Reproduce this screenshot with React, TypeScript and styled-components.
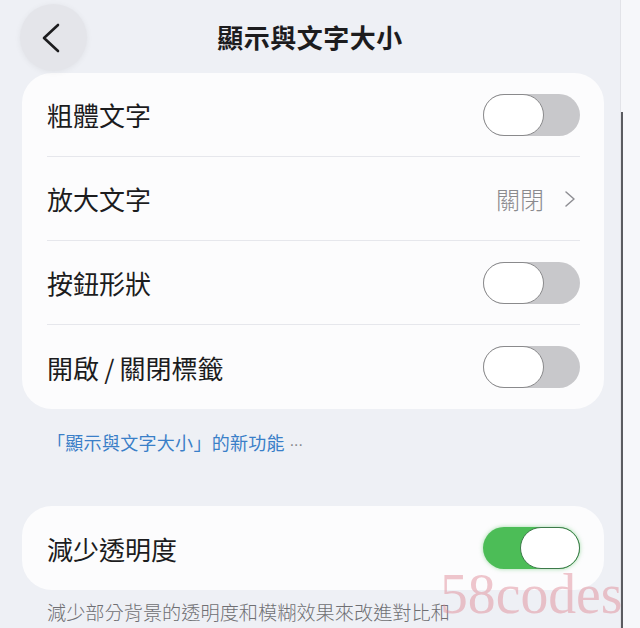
import styled, { createGlobalStyle } from 'styled-components';

const GlobalStyle = createGlobalStyle`
  html, body {
    margin: 0;
    padding: 0;
    background: #eef0f5;
  }
  body {
    font-family: 'Noto Sans CJK TC', 'Noto Sans', sans-serif;
    color: #1c1c1e;
  }
`;

type RowItem =
  | { label: string; kind: 'toggle'; on: boolean }
  | { label: string; kind: 'link'; value: string };

const textRows: RowItem[] = [
  { label: '粗體文字', kind: 'toggle', on: false },
  { label: '放大文字', kind: 'link', value: '關閉' },
  { label: '按鈕形狀', kind: 'toggle', on: false },
  { label: '開啟\u2009/\u2009關閉標籤', kind: 'toggle', on: false },
];

function Toggle({ on }: { on: boolean }) {
  return (
    <Track $on={on}>
      <Knob $on={on} />
    </Track>
  );
}

function Chevron() {
  return (
    <svg width='12' height='18' viewBox='0 0 12 18' fill='none'>
      <path d='M2 2 L10 9 L2 16' stroke='#8e8e93' strokeWidth='1.5' strokeLinecap='round' strokeLinejoin='round' />
    </svg>
  );
}

export default function App() {
  return (
    <Screen>
      <GlobalStyle />
      <Main>
        <Header>
          <BackButton>
            <svg width='22' height='32' viewBox='0 0 22 32' fill='none'>
              <path d='M18 3 L4 16 L18 29' stroke='#1c1c1e' strokeWidth='2.6' strokeLinecap='round' strokeLinejoin='round' />
            </svg>
          </BackButton>
          <Title>顯示與文字大小</Title>
        </Header>

        <Card>
          {textRows.map((row, i) => (
            <Row key={row.label} $last={i === textRows.length - 1}>
              <Label>{row.label}</Label>
              {row.kind === 'toggle' ? (
                <Toggle on={row.on} />
              ) : (
                <Detail>
                  <span>{row.value}</span>
                  <Chevron />
                </Detail>
              )}
            </Row>
          ))}
        </Card>

        <NewLink>
          「顯示與文字大小」的新功能 <Dots>···</Dots>
        </NewLink>

        <Card>
          <Row $last>
            <Label>減少透明度</Label>
            <Toggle on />
          </Row>
        </Card>

        <Footnote>減少部分背景的透明度和模糊效果來改進對比和</Footnote>
      </Main>
      <Edge />
      <ScrollThumb />
      <Watermark>58codes</Watermark>
    </Screen>
  );
}

const Screen = styled.div`
  position: relative;
  display: flex;
  width: 640px;
  height: 628px;
  overflow: hidden;
  background: #eef0f5;
`;

const Main = styled.div`
  width: 620px;
  display: flex;
  flex-direction: column;
`;

const Edge = styled.div`
  flex: 1;
  background: #f6f7fa;
  border-left: 1px solid #e2e3e8;
`;

const ScrollThumb = styled.div`
  position: absolute;
  left: 621px;
  top: 112px;
  bottom: 0;
  width: 2px;
  background: #5a5b60;
`;

const Header = styled.header`
  position: relative;
  height: 73px;
  display: flex;
  align-items: center;
  justify-content: center;
`;

const BackButton = styled.div`
  position: absolute;
  left: 20px;
  top: 4px;
  width: 67px;
  height: 67px;
  border-radius: 50%;
  background: #e4e5ea;
  box-shadow: 0 1px 6px rgba(0, 0, 0, 0.06);
  display: flex;
  align-items: center;
  justify-content: center;
  padding-right: 6px;
  box-sizing: border-box;
`;

const Title = styled.h1`
  margin: 0;
  font-size: 26px;
  font-weight: 700;
  letter-spacing: 0.5px;
  color: #1c1c1e;
`;

const Card = styled.section`
  margin-left: 22px;
  width: 582px;
  background: #fcfcfd;
  border-radius: 30px;
  padding: 0 24px 0 25px;
  box-sizing: border-box;
`;

const Row = styled.div<{ $last?: boolean }>`
  height: 84px;
  display: flex;
  align-items: center;
  justify-content: space-between;
  border-bottom: ${p => (p.$last ? 'none' : '1.5px solid #e6e7ec')};
  box-sizing: border-box;
`;

const Label = styled.span`
  font-size: 26px;
  font-weight: 400;
  color: #1c1c1e;
  white-space: pre;
`;

const Detail = styled.div`
  display: flex;
  align-items: center;
  gap: 20px;
  padding-right: 4px;
  font-size: 24px;
  font-weight: 300;
  color: #8a8a8e;
`;

const Track = styled.div<{ $on: boolean }>`
  width: 97px;
  height: 42px;
  border-radius: 21px;
  background: ${p => (p.$on ? '#4cbd57' : '#c8c8cb')};
  display: flex;
  justify-content: ${p => (p.$on ? 'flex-end' : 'flex-start')};
  box-shadow: ${p => (p.$on ? '0 0 4px rgba(76, 189, 87, 0.5)' : 'none')};
`;

const Knob = styled.div<{ $on: boolean }>`
  width: ${p => (p.$on ? '60px' : '61px')};
  height: 42px;
  border-radius: 21px;
  background: #ffffff;
  border: 1.5px solid ${p => (p.$on ? '#3d7a4a' : '#8a8a8c')};
  box-sizing: border-box;
`;

const NewLink = styled.div`
  height: 97px;
  padding: 20px 0 0 47px;
  box-sizing: border-box;
  font-size: 18px;
  color: #3a7fc8;
  letter-spacing: 0.3px;
`;

const Dots = styled.span`
  font-family: 'Liberation Sans', sans-serif;
  font-size: 16px;
  letter-spacing: -1px;
  color: #8a8a8e;
`;

const Footnote = styled.p`
  margin: 8px 0 0 47px;
  font-size: 19.2px;
  font-weight: 300;
  color: #6f6f73;
`;

const Watermark = styled.div`
  position: absolute;
  left: 440px;
  top: 562px;
  font-family: 'Liberation Serif', serif;
  font-size: 58px;
  line-height: 64px;
  color: rgba(222, 130, 145, 0.45);
  transform: scaleX(0.96);
  transform-origin: left top;
  pointer-events: none;
`;
